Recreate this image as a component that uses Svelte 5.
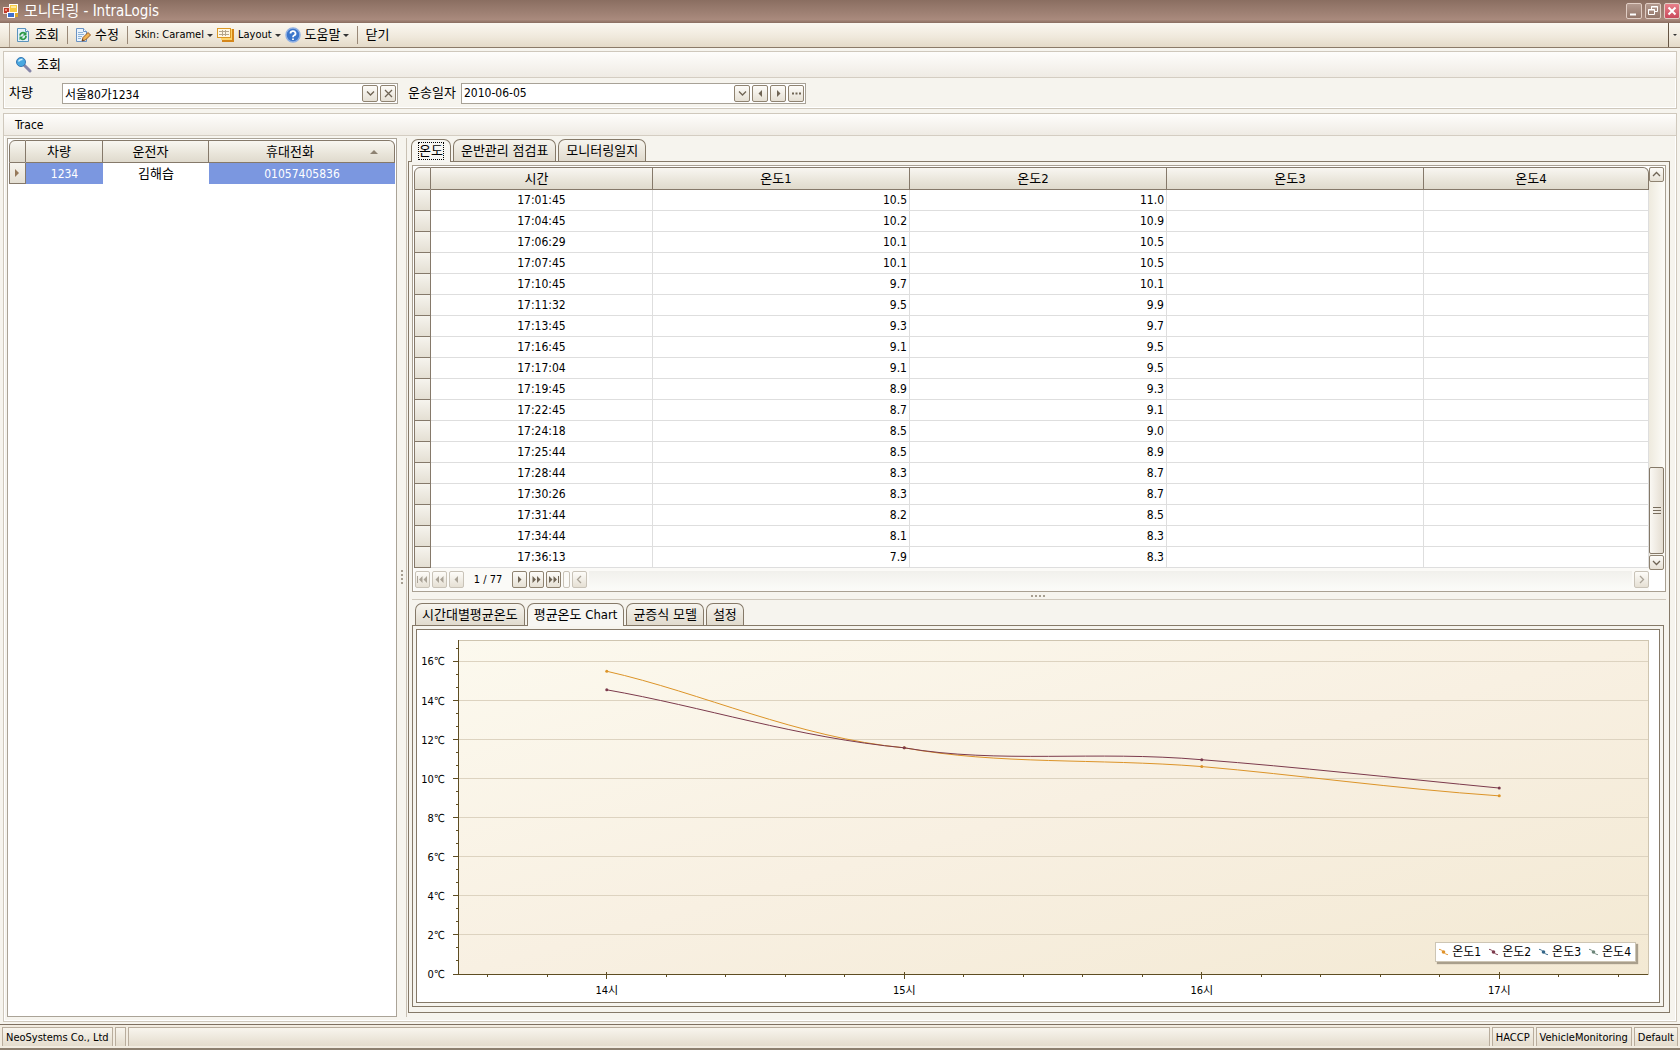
<script>
    const vehicles = [{ no: '1234', driver: '김해습', phone: '01057405836' }];

    const temps = [
        ['17:01:45', '10.5', '11.0'],
        ['17:04:45', '10.2', '10.9'],
        ['17:06:29', '10.1', '10.5'],
        ['17:07:45', '10.1', '10.5'],
        ['17:10:45', '9.7', '10.1'],
        ['17:11:32', '9.5', '9.9'],
        ['17:13:45', '9.3', '9.7'],
        ['17:16:45', '9.1', '9.5'],
        ['17:17:04', '9.1', '9.5'],
        ['17:19:45', '8.9', '9.3'],
        ['17:22:45', '8.7', '9.1'],
        ['17:24:18', '8.5', '9.0'],
        ['17:25:44', '8.5', '8.9'],
        ['17:28:44', '8.3', '8.7'],
        ['17:30:26', '8.3', '8.7'],
        ['17:31:44', '8.2', '8.5'],
        ['17:34:44', '8.1', '8.3'],
        ['17:36:13', '7.9', '8.3'],
    ];

    const hours = ['14시', '15시', '16시', '17시'];
    const legend = [
        { name: '온도1', color: '#e0932a' },
        { name: '온도2', color: '#7c3a4c' },
        { name: '온도3', color: '#336688' },
        { name: '온도4', color: '#6b8578' },
    ];
    // value at each hour, then the two control values of every segment
    const series = [
        { color: '#dc9428', values: [15.5, 11.58, 10.62, 9.12], ctrl: [[14.4, 12.1], [10.7, 11.05], [10.2, 9.5]] },
        { color: '#7c3a4c', values: [14.55, 11.58, 10.97, 9.52], ctrl: [[13.7, 12.1], [10.75, 11.45], [10.6, 10.05]] },
    ];
    const maxTemp = 17.1;

    let w = 1242;
    let h = 372;

    const left = 41;
    $: right = w - 11;
    $: bottom = h - 28;
    const top = 10;
    $: step = (right - left) / 4;
    $: unit = (bottom - top) / maxTemp;
    $: px = (i) => left + step * (i + 0.5);
    $: py = (v) => bottom - v * unit;
    $: curve = (s) => s.ctrl.reduce((d, c, i) =>
        d + ` C${px(i + 0.32)} ${py(c[0])} ${px(i + 0.64)} ${py(c[1])} ${px(i + 1)} ${py(s.values[i + 1])}`,
        `M${px(0)} ${py(s.values[0])}`);
</script>

<div class="window">
    <header class="title">
        <svg width="16" height="16" viewBox="0 0 16 16">
            <rect x="6.500" y="1.500" width="8" height="8" fill="#f8cc44" stroke="#fff" />
            <path d="M8 3h5v2H8z" fill="#ffeaa0" />
            <rect x="0.500" y="4.500" width="6" height="6" fill="#c0392a" stroke="#f3d9d0" />
            <path d="M2 6h2v2H2z" fill="#f0907c" />
            <rect x="4.500" y="9.500" width="7" height="5" fill="#3f6fcc" stroke="#fff" />
            <path d="M12 10h3v4h-3z" fill="#e0a92c" />
        </svg>
        <h1>모니터링 - IntraLogis</h1>
        <button aria-label="Minimize"><svg width="14" height="14" viewBox="0 0 14 14"><path d="M3 10.500h6" stroke-width="2" /></svg></button>
        <button aria-label="Restore"><svg width="14" height="14" viewBox="0 0 14 14"><path d="M5.500 5V2.500h6v5H9M5 3h7M2 6h7" /><path d="M2.500 5.500h6v5h-6z" /></svg></button>
        <button class="close" aria-label="Close"><svg width="14" height="14" viewBox="0 0 14 14"><path d="M3.500 3.500l7 7M10.500 3.500l-7 7" stroke-width="2" /></svg></button>
    </header>

    <nav class="toolbar">
        <button>
            <svg width="16" height="16" viewBox="0 0 16 16"><path d="M2.500 1.500h8l3 3v10h-11z" fill="#e4f1fb" stroke="#5b93bd" /><path d="M10.500 1.500v3h3" fill="#fff" stroke="#5b93bd" /><path d="M5 8.500a3 3 0 0 1 5-2M11 9a3 3 0 0 1-5 2.500" fill="none" stroke="#2c9a48" stroke-width="1.800" /><path d="M11.500 4.500v4h-4zM4.500 13V9.500h4z" fill="#2c9a48" /></svg>
            조회
        </button>
        <i></i>
        <button>
            <svg width="16" height="16" viewBox="0 0 16 16"><path d="M1.500 1.500h7l3 3v10h-10z" fill="#eaf3fc" stroke="#6b93c4" /><path d="M8.500 1.500v3h3" fill="#fff" stroke="#6b93c4" /><path d="M3 5.500h5M3 7.500h6M3 9.500h4M3 11.500h3" stroke="#8db2d8" /><path d="M7 14l1-3.500 5-5 2.500 2.500-5 5z" fill="#f0b455" stroke="#94592c" /><path d="M7 14l.5-2 1.500 1.500z" fill="#5c3a20" /></svg>
            수정
        </button>
        <i></i>
        <button class="latin">Skin: Caramel<b></b></button>
        <button class="latin">
            <svg width="17" height="16" viewBox="0 0 17 16"><path d="M14 2h3v13H5v-3h9z" fill="#d4861a" /><path d="M13 2h2v11H4v-2h9z" fill="#ffd468" /><rect x="0.500" y="1.500" width="13" height="9" fill="#fff8e2" stroke="#dc9824" /><path d="M2 4.500h10M2 7.500h10M5.500 3v6M8.500 3v6" stroke="#b5a78c" /></svg>
            Layout<b></b>
        </button>
        <button>
            <svg width="16" height="16" viewBox="0 0 16 16"><circle cx="8" cy="8" r="7" fill="#3c76cb" stroke="#91b1e4" stroke-width="1.500" /><path d="M5.500 6.500a2.500 2.300 0 1 1 3.500 2q-1 .5-1 1.700M8 11.500v1.500" fill="none" stroke="#fff" stroke-width="1.800" /></svg>
            도움말<b></b>
        </button>
        <i></i>
        <button>닫기</button>
        <button class="more" aria-label="More"><b></b></button>
    </nav>

    <main>
        <section class="group">
            <div class="group-head search">
                <svg width="17" height="17" viewBox="0 0 17 17"><path d="M9 9l6 6" stroke="#8585a8" stroke-width="3" stroke-linecap="round" /><circle cx="6" cy="6" r="4.500" fill="#49a8e0" stroke="#3978b4" /><path d="M3.500 5.500q1-2.500 4-2" stroke="#d9f2ff" stroke-width="1.500" fill="none" /></svg>
                <h2>조회</h2>
            </div>
            <form class="filters" on:submit|preventDefault>
                <label for="vehicle">차량</label>
                <div class="edit">
                    <input id="vehicle" value="서울80가1234">
                    <button type="button" aria-label="Open list"><svg width="9" height="9" viewBox="0 0 9 9"><path d="M1 2.500l3.500 3.500L8 2.500" /></svg></button>
                    <button type="button" aria-label="Clear"><svg width="9" height="9" viewBox="0 0 9 9"><path d="M1 1l7 7M8 1L1 8" /></svg></button>
                </div>
                <label for="date">운송일자</label>
                <div class="edit">
                    <input id="date" value="2010-06-05">
                    <button type="button" aria-label="Open calendar"><svg width="9" height="9" viewBox="0 0 9 9"><path d="M1 2.500l3.500 3.500L8 2.500" /></svg></button>
                    <button type="button" aria-label="Previous day"><svg width="9" height="9" viewBox="0 0 9 9"><path class="fill" d="M6 1v7L2.500 4.500z" /></svg></button>
                    <button type="button" aria-label="Next day"><svg width="9" height="9" viewBox="0 0 9 9"><path class="fill" d="M3 1v7l3.500-3.500z" /></svg></button>
                    <button type="button" aria-label="Choose"><svg width="9" height="9" viewBox="0 0 9 9"><path class="fill" d="M0 3.500h2v2H0zM3.500 3.500h2v2h-2zM7 3.500h2v2H7z" /></svg></button>
                </div>
            </form>
        </section>

        <section class="group trace">
            <div class="group-head"><h2 class="latin">Trace</h2></div>
            <div class="split">
                <div class="list">
                    <table>
                        <thead>
                            <tr><th class="ind"></th><th class="no">차량</th><th class="driver">운전자</th><th class="sorted">휴대전화</th></tr>
                        </thead>
                        <tbody>
                            {#each vehicles as v}
                                <tr>
                                    <td class="ind"><svg width="5" height="8" viewBox="0 0 5 8"><path d="M0 0v8l4-4z" fill="#96795a" /></svg></td>
                                    <td class="sel">{v.no}</td>
                                    <td class="name">{v.driver}</td>
                                    <td class="sel">{v.phone}</td>
                                </tr>
                            {/each}
                        </tbody>
                    </table>
                </div>
                <div class="vsplit"><span></span></div>

                <div class="detail">
                    <div class="tabs">
                        <button class="on"><span class="focus">온도</span></button>
                        <button>운반관리 점검표</button>
                        <button>모니터링일지</button>
                    </div>
                    <div class="page">
                        <div class="grid">
                            <div class="grid-body">
                                <table class="temps">
                                    <thead>
                                        <tr><th class="ind"></th><th class="time">시간</th><th class="temp">온도1</th><th class="temp">온도2</th><th class="temp">온도3</th><th>온도4</th></tr>
                                    </thead>
                                    <tbody>
                                        {#each temps as row}
                                            <tr>
                                                <td class="ind"></td>
                                                <td>{row[0]}</td>
                                                <td class="num">{row[1]}</td>
                                                <td class="num">{row[2]}</td>
                                                <td></td>
                                                <td></td>
                                            </tr>
                                        {/each}
                                    </tbody>
                                </table>
                                <div class="vbar">
                                    <button aria-label="Scroll up"><svg width="9" height="9" viewBox="0 0 9 9"><path d="M1 6l3.500-3.500L8 6" /></svg></button>
                                    <div class="track"></div>
                                    <div class="thumb"></div>
                                    <button aria-label="Scroll down"><svg width="9" height="9" viewBox="0 0 9 9"><path d="M1 3l3.500 3.500L8 3" /></svg></button>
                                </div>
                            </div>
                            <div class="pager">
                                <button disabled aria-label="First"><svg width="11" height="9" viewBox="0 0 11 9"><path class="fill" d="M0 1h1v7H0zM5.500 1v7L2 4.500zM10 1v7L6.500 4.500z" /></svg></button>
                                <button disabled aria-label="Previous page"><svg width="9" height="9" viewBox="0 0 9 9"><path class="fill" d="M4 1v7L.5 4.500zM8.500 1v7L5 4.500z" /></svg></button>
                                <button disabled aria-label="Previous"><svg width="9" height="9" viewBox="0 0 9 9"><path class="fill" d="M6 1v7L2.500 4.500z" /></svg></button>
                                <span class="count">1 / 77</span>
                                <button aria-label="Next"><svg width="9" height="9" viewBox="0 0 9 9"><path class="fill" d="M3 1v7l3.500-3.500z" /></svg></button>
                                <button aria-label="Next page"><svg width="9" height="9" viewBox="0 0 9 9"><path class="fill" d="M.5 1v7L4 4.500zM5 1v7l3.500-3.500z" /></svg></button>
                                <button aria-label="Last"><svg width="11" height="9" viewBox="0 0 11 9"><path class="fill" d="M1 1v7l3.500-3.500zM5.500 1v7L9 4.500zM10 1h1v7h-1z" /></svg></button>
                                <span class="grip"></span>
                                <button disabled aria-label="Scroll left"><svg width="9" height="9" viewBox="0 0 9 9"><path d="M6 1L2.500 4.500 6 8" /></svg></button>
                                <div class="hbar"></div>
                                <button disabled aria-label="Scroll right"><svg width="9" height="9" viewBox="0 0 9 9"><path d="M3 1l3.500 3.500L3 8" /></svg></button>
                            </div>
                        </div>
                        <div class="hsplit"><span></span></div>

                        <div class="tabs lower">
                            <button>시간대별평균온도</button>
                            <button class="on">평균온도 Chart</button>
                            <button>균증식 모델</button>
                            <button>설정</button>
                        </div>
                        <div class="chart-page">
                            <div class="chart" bind:clientWidth={w} bind:clientHeight={h}>
                                <svg width={w} height={h}>
                                    <defs>
                                        <linearGradient id="plot" x1="0" y1="0" x2="1" y2="1">
                                            <stop offset="0" stop-color="#fcf9ee" />
                                            <stop offset="0.500" stop-color="#f8f0e2" />
                                            <stop offset="1" stop-color="#f3e9d3" />
                                        </linearGradient>
                                    </defs>
                                    <rect class="plot" x={left} y={top} width={right - left} height={bottom - top} fill="url(#plot)" />
                                    {#each Array(9) as _, i}
                                        <path class="line" d="M{left} {py(i * 2)}H{right}" />
                                        <path class="axis" d="M{left - 5} {py(i * 2)}h5" />
                                        <text x={left - 13} y={py(i * 2) + 4} text-anchor="end">{i * 2}℃</text>
                                    {/each}
                                    {#each Array(26) as _, i}
                                        <path class="axis" d="M{left - 2} {py(i * 2 / 3)}h2" />
                                    {/each}
                                    <path class="axis" d="M{left} {top}V{bottom}H{right}" />
                                    {#each Array(20) as _, i}
                                        <path class="axis" d="M{left + step * (i + 0.5) / 5} {bottom}v3" />
                                    {/each}
                                    {#each hours as hour, i}
                                        <path class="axis" d="M{px(i)} {bottom - 2}v7" />
                                        <text x={px(i)} y={bottom + 20} text-anchor="middle">{hour}</text>
                                    {/each}
                                    {#each series as s}
                                        <path class="curve" d={curve(s)} stroke={s.color} />
                                        {#each s.values as v, i}
                                            <circle cx={px(i)} cy={py(v)} r="1.500" fill={s.color} />
                                        {/each}
                                    {/each}
                                </svg>
                                <ul class="legend">
                                    {#each legend as item}
                                        <li>
                                            <svg width="9" height="10" viewBox="0 0 10 10"><path d="M0 2q3 0 5 3t5 3" fill="none" stroke={item.color} /><circle cx="5" cy="5" r="2" fill={item.color} /></svg>
                                            {item.name}
                                        </li>
                                    {/each}
                                </ul>
                            </div>
                        </div>
                    </div>
                </div>
            </div>
        </section>
    </main>

    <footer>
        <span>NeoSystems Co., Ltd</span>
        <span class="gap"></span>
        <span class="fill"></span>
        <span>HACCP</span>
        <span>VehicleMonitoring</span>
        <span>Default</span>
    </footer>
</div>

<style>
    :global(body) {
        margin: 0;
    }

    .window {
        min-height: 100vh;
        display: flex;
        flex-direction: column;
        background: #f6f4ee;
        color: #000;
        font: 12px/16px "DejaVu Sans Condensed", "Noto Sans", "Noto Sans CJK KR", sans-serif;
    }

    .window, .window * {
        box-sizing: border-box;
    }

    button, input {
        font: inherit;
        color: inherit;
        margin: 0;
        padding: 0;
    }

    button {
        display: flex;
        align-items: center;
        justify-content: center;
        flex: none;
    }

    svg {
        display: block;
        flex: none;
    }

    .title {
        display: flex;
        align-items: center;
        gap: 3px;
        height: 23px;
        padding: 0 0 2px 3px;
        background: linear-gradient(#8a6e61, #a98a7d 85%, #8a6e61);
    }

    h1 {
        flex: 1;
        margin: 0 0 0 2px;
        color: #fff;
        font-size: 15px;
        line-height: 20px;
        font-weight: normal;
    }

    .title button {
        width: 16px;
        height: 16px;
        border: 1px solid #e0cdc4;
        border-radius: 2px;
        background: linear-gradient(#b39a8f, #94776a);
    }

    .title .close {
        background: linear-gradient(#e8808a, #c94a5c);
    }

    .title button path {
        fill: none;
        stroke: #fff;
    }

    .toolbar {
        display: flex;
        align-items: center;
        height: 25px;
        border-bottom: 1px solid #8b7a68;
        background: linear-gradient(#fbf8f1, #efe8db 60%, #e4dac8);
        font-size: 13px;
    }

    .toolbar::before {
        content: "";
        width: 9px;
        height: 24px;
        margin-right: 3px;
        border-right: 1px solid #b5a593;
    }

    .toolbar button {
        gap: 4px;
        height: 22px;
        padding: 0 2px;
        border: 0;
        background: none;
    }

    .toolbar .latin {
        font-size: 11px;
    }

    .toolbar i {
        width: 1px;
        height: 18px;
        margin: 0 5px 0 6px;
        background: #998877;
    }

    .toolbar b {
        margin-left: -1px;
        border: 3px solid transparent;
        border-top-color: #333;
        border-bottom: 0;
    }

    .toolbar .more {
        width: 12px;
        height: 24px;
        margin-left: auto;
        border-left: 1px solid #665544;
    }

    .more b {
        margin: 0;
        border-width: 2px;
    }

    main {
        flex: 1;
        display: flex;
        flex-direction: column;
        gap: 4px;
        padding: 3px 3px 2px;
    }

    .group {
        border: 1px solid #cfc8bc;
        box-shadow: inset 0 0 0 1px #fff;
    }

    .group-head {
        display: flex;
        align-items: center;
        gap: 5px;
        height: 22px;
        padding-left: 11px;
        border-bottom: 1px solid #d4cdc2;
        background: linear-gradient(#fefdfb, #efebe4);
    }

    .search {
        height: 26px;
    }

    h2 {
        margin: 0;
        font-size: 13px;
        line-height: 16px;
        font-weight: normal;
    }

    h2.latin {
        font-size: 12px;
    }

    .filters {
        display: flex;
        align-items: center;
        height: 30px;
        padding: 4px 5px;
    }

    .filters label {
        width: 53px;
        font-size: 13px;
    }

    .edit {
        display: flex;
        align-items: center;
        gap: 2px;
        flex: 0 1 336px;
        height: 21px;
        margin-right: 10px;
        padding-right: 1px;
        border: 1px solid #a8a297;
        background: #fff;
    }

    .edit + label + .edit {
        flex-basis: 345px;
    }

    .edit input {
        flex: 1;
        min-width: 0;
        height: 17px;
        padding: 0 2px;
        border: 0;
        outline: 0;
        background: none;
    }

    .edit button, .vbar button, .pager button {
        width: 16px;
        height: 17px;
        border: 1px solid #8f8371;
        border-radius: 2px;
        background: linear-gradient(#fdfcf9, #e6e0d4);
    }

    .edit path, .vbar path, .pager path {
        fill: none;
        stroke: #6f6454;
        stroke-width: 1.3;
    }

    .edit .fill, .pager .fill {
        fill: #6f6454;
        stroke: none;
    }

    .trace {
        flex: 1;
        display: flex;
        flex-direction: column;
    }

    .split {
        flex: 1;
        display: flex;
        padding: 2px 6px 4px 3px;
    }

    .list {
        flex: 0 0 390px;
        padding: 1px;
        border: 1px solid #aaa397;
        background: #fff;
    }

    table {
        width: 100%;
        border-collapse: separate;
        border-spacing: 0;
        table-layout: fixed;
    }

    th {
        height: 23px;
        padding: 0 10px 0 0;
        border-right: 1px solid #85796a;
        border-bottom: 1px solid #85796a;
        border-top: 1px solid #85796a;
        background: linear-gradient(#f8f6f1, #e9e5da 60%, #dfdacd);
        font-size: 13px;
        font-weight: normal;
    }

    th:first-child {
        padding: 0;
        border-left: 1px solid #85796a;
        border-top-left-radius: 6px;
    }

    th:last-child {
        border-top-right-radius: 6px;
    }

    td {
        height: 21px;
        padding: 0;
        text-align: center;
    }

    .name {
        font-size: 13px;
    }

    .ind {
        width: 17px;
    }

    td.ind {
        border: 1px solid #85796a;
        border-top: 0;
        background: linear-gradient(#f6f4ee, #e4dfd3);
    }

    td.ind svg {
        margin: 0 auto;
    }

    .no {
        width: 77px;
    }

    .driver {
        width: 106px;
    }

    .sorted {
        position: relative;
        padding-right: 23px;
    }

    .sorted::after {
        content: "";
        position: absolute;
        top: 9px;
        right: 16px;
        border: 4px solid transparent;
        border-bottom-color: #8d8272;
        border-top: 0;
    }

    .sel {
        background: #7b97e0;
        color: #fff;
    }

    .vsplit {
        flex: 0 0 10px;
        display: flex;
        align-items: center;
        justify-content: center;
        border-right: 1px solid #c9c1b4;
        margin-right: 1px;
    }

    .vsplit span {
        width: 2px;
        height: 16px;
        background: repeating-linear-gradient(#a79f91 0 2px, transparent 2px 4px);
    }

    .detail {
        flex: 1;
        min-width: 0;
        display: flex;
        flex-direction: column;
        padding: 1px 0 4px;
    }

    .tabs {
        display: flex;
        align-items: flex-end;
        gap: 2px;
        padding-left: 3px;
    }

    .tabs button {
        height: 22px;
        padding: 0 7px;
        border: 1px solid #857968;
        border-bottom: 0;
        border-radius: 7px 7px 0 0;
        background: linear-gradient(#f7f5ef, #e0dacd);
        font-size: 13px;
    }

    .tabs .on {
        position: relative;
        height: 23px;
        margin-bottom: -1px;
        background: #f7f6f2;
    }

    .focus {
        outline: 1px dotted #000;
    }

    .page {
        flex: 1;
        display: flex;
        flex-direction: column;
        padding: 3px;
        border: 1px solid #857968;
    }

    .grid {
        padding: 1px 0 0 1px;
        border: 1px solid #a9a092;
        background: #fff;
    }

    .grid-body {
        display: flex;
    }

    .temps {
        flex: 1;
        width: auto;
        min-width: 0;
    }

    .temps td {
        border-right: 1px solid #dedede;
        border-bottom: 1px solid #dedede;
    }

    .temps .num {
        padding-right: 2px;
        text-align: right;
    }

    .temps td.ind {
        border-left: 1px solid #85796a;
        border-right: 1px solid #85796a;
        border-bottom: 1px solid #85796a;
    }

    .time {
        width: 222px;
    }

    .temp {
        width: 257px;
    }

    .vbar {
        flex: 0 0 16px;
        display: flex;
        flex-direction: column;
        gap: 1px;
        margin-bottom: -2px;
        padding-right: 1px;
        background: linear-gradient(90deg, #eeeade, #fdfcf8);
    }

    .vbar button {
        position: relative;
        width: 15px;
        height: 15px;
    }

    .track {
        flex: 1;
    }

    .thumb {
        height: 87px;
        border: 1px solid #857968;
        border-radius: 2px;
        background: repeating-linear-gradient(#776c5c 0 1px, transparent 1px 3px) center / 8px 7px no-repeat, linear-gradient(90deg, #faf8f3, #e4ddd1);
    }

    .pager {
        display: flex;
        align-items: center;
        gap: 2px;
        height: 23px;
        margin-right: 16px;
        padding-left: 1px;
        background: #fbfaf7;
    }

    .pager button {
        width: 15px;
    }

    .pager button:disabled {
        border-color: #c9c3b8;
    }

    .pager button:disabled path {
        stroke: #aaa397;
    }

    .pager button:disabled .fill {
        fill: #aaa397;
        stroke: none;
    }

    .count {
        width: 44px;
        font-size: 11px;
        text-align: center;
    }

    .grip {
        width: 7px;
        height: 17px;
        border: 1px solid #c9c3b8;
        border-radius: 2px;
    }

    .hbar {
        flex: 1;
        height: 18px;
        background: linear-gradient(#f1f0ec, #fbfbf8);
    }

    .hsplit {
        display: flex;
        align-items: center;
        justify-content: center;
        height: 8px;
        border-bottom: 1px solid #cfc8bc;
    }

    .hsplit span {
        width: 16px;
        height: 2px;
        background: repeating-linear-gradient(90deg, #a79f91 0 2px, transparent 2px 4px);
    }

    .lower {
        padding: 3px 0 0 3px;
    }

    .lower button {
        padding: 0 6px;
    }

    .chart-page {
        flex: 1;
        display: flex;
        margin-right: 2px;
        margin-bottom: 2px;
        padding: 3px;
        border: 1px solid #857968;
    }

    .chart {
        flex: 1;
        min-width: 0;
        min-height: 372px;
        position: relative;
        border: 1px solid #857968;
        background: #fff;
    }

    .chart > svg {
        position: absolute;
    }

    .chart text {
        font-size: 11px;
    }

    .plot {
        stroke: #cfc5b0;
        shape-rendering: crispEdges;
    }

    .line {
        stroke: #ddd3c0;
        shape-rendering: crispEdges;
    }

    .axis {
        fill: none;
        stroke: #5e4d22;
        shape-rendering: crispEdges;
    }

    .curve {
        fill: none;
    }

    .legend {
        position: absolute;
        right: 23px;
        bottom: 40px;
        display: flex;
        gap: 8px;
        margin: 0;
        padding: 1px 4px 1px 3px;
        list-style: none;
        border: 1px solid #cdc5b4;
        background: #fff;
        box-shadow: 2px 2px 1px #a99f8c;
    }

    .legend li {
        display: flex;
        align-items: center;
        gap: 4px;
    }

    footer {
        display: flex;
        gap: 2px;
        height: 26px;
        padding: 2px;
        border-top: 1px solid #7d6f60;
        border-bottom: 2px solid #8d8070;
        background: #f2ece1;
    }

    footer span {
        padding: 2px 3px;
        border: 1px solid #b9ad9d;
        border-bottom: 0;
        background: linear-gradient(#f8f5ee, #e4dccd);
        font-size: 11px;
    }

    .gap {
        width: 11px;
    }

    footer .fill {
        flex: 1;
    }
</style>
